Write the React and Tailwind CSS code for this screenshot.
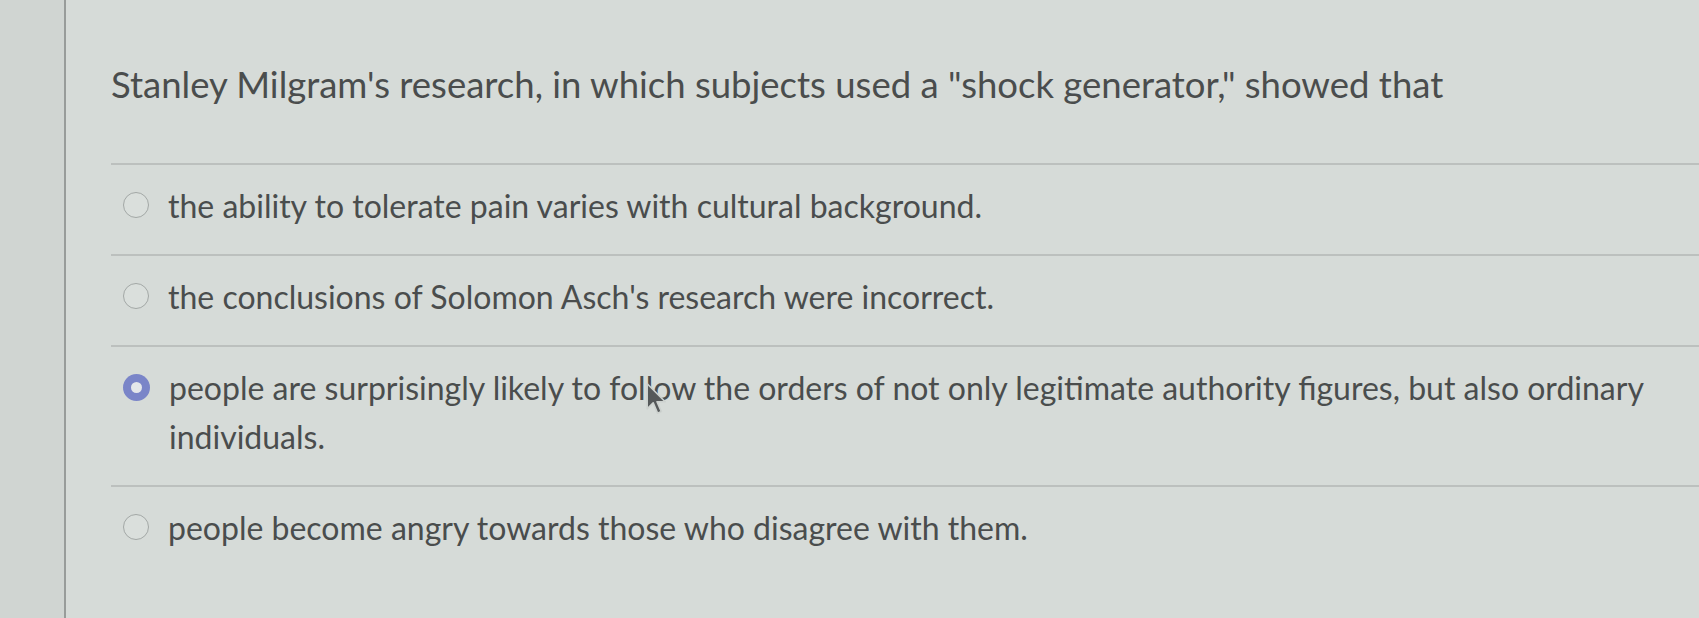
import React, { useState } from "react";

const options = [
  "the ability to tolerate pain varies with cultural background.",
  "the conclusions of Solomon Asch's research were incorrect.",
  "people are surprisingly likely to follow the orders of not only legitimate authority figures, but also ordinary individuals.",
  "people become angry towards those who disagree with them.",
];

const Radio = ({ checked }) =>
  checked ? (
    <span className="mt-[11px] w-[27px] h-[27px] shrink-0 rounded-full bg-[#7a85c8] flex items-center justify-center">
      <span className="w-[11px] h-[11px] rounded-full bg-[#e4e7ea]" />
    </span>
  ) : (
    <span className="mt-[11px] w-[26px] h-[26px] shrink-0 rounded-full border-[1.5px] border-[#a3a8a6] bg-[#dadfdc]" />
  );

const App = () => {
  const [selected, setSelected] = useState(2);

  return (
    <div
      className="relative w-full h-[618px] overflow-hidden flex bg-[#d6dbd8] text-[#4a4d4d]"
      style={{ fontFamily: "Lato, 'Open Sans', sans-serif" }}
    >
      {/* left gutter */}
      <div className="w-[66px] shrink-0 bg-[#d0d5d2] border-r-2 border-[#989c9a]" />

      <div className="flex-1 pl-[45px]">
        {/* Question */}
        <h1 className="pt-[60px] pb-[55px] text-[36.5px] leading-[48px] font-normal border-b-2 border-[#bcc0be] whitespace-nowrap">
          Stanley Milgram's research, in which subjects used a "shock generator," showed that
        </h1>

        {/* Answers */}
        {options.map((text, i) => (
          <label
            key={i}
            onClick={() => setSelected(i)}
            className={`flex gap-[19px] pl-[12px] pt-[16px] pb-[24px] cursor-pointer ${
              i < options.length - 1 ? "border-b-2 border-[#bcc0be]" : ""
            }`}
          >
            <Radio checked={selected === i} />
            <span className="text-[32px] leading-[49px] max-w-[1500px]">{text}</span>
          </label>
        ))}
      </div>

      {/* mouse pointer */}
      <svg
        className="absolute left-[645px] top-[381px]"
        width="24"
        height="36"
        viewBox="0 0 22 32"
      >
        <path
          d="M2 2 L2 25 L7.5 19.5 L11.5 29 L15 27.5 L11 18.5 L18.5 18.5 Z"
          fill="#55595a"
          stroke="#cdd2cf"
          strokeWidth="1.5"
          strokeLinejoin="round"
        />
      </svg>
    </div>
  );
};

export default App;
